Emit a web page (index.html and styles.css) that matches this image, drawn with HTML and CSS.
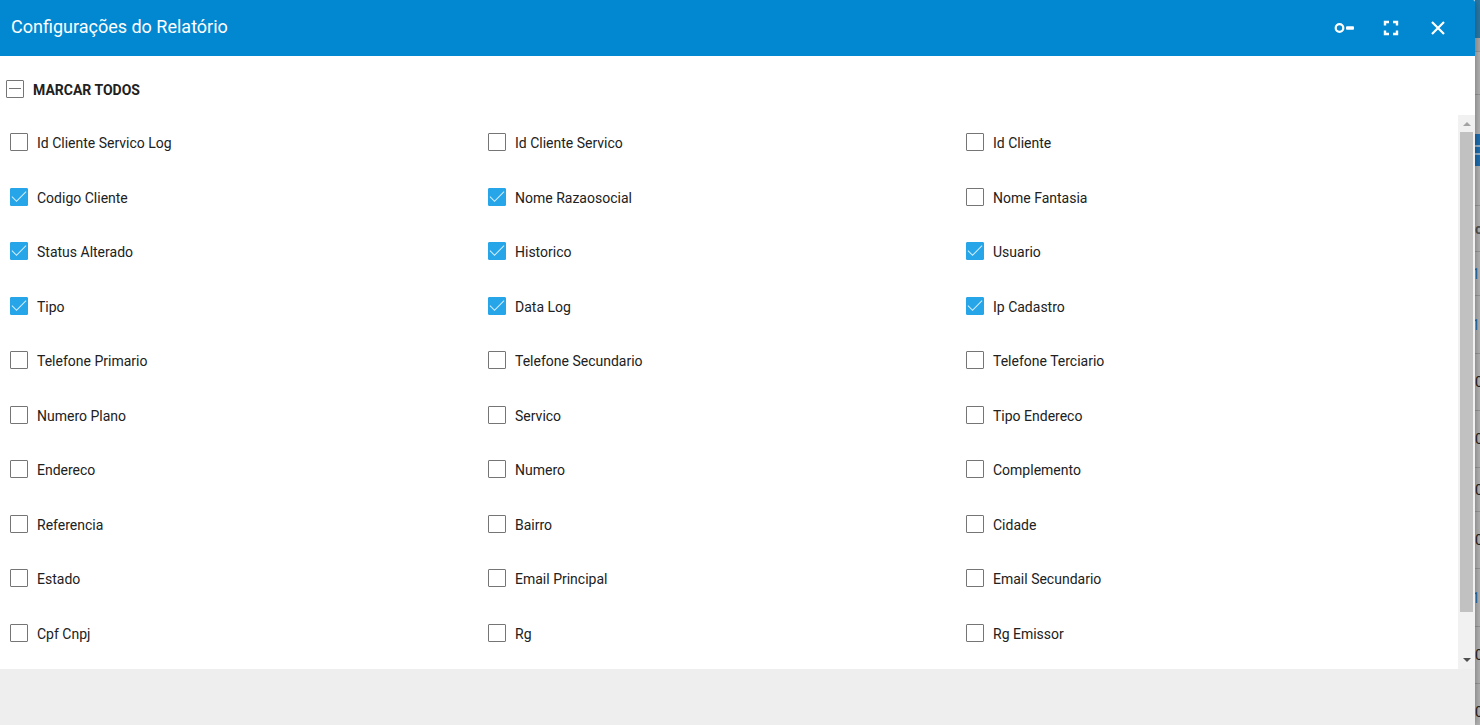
FILE: index.html
```
<!doctype html>
<html lang="pt-BR">
<head>
  <meta charset="UTF-8" />
  <title>Configurações do Relatório</title>
  <meta name="viewport" content="width=device-width, initial-scale=1.0" />
  <link rel="stylesheet" href="styles.css">
</head>
<body>
  <div class="page">
    <!-- Report settings dialog -->
    <main class="dialog">
      <header class="dialog-header">
        <h1>Configurações do Relatório</h1>
        <div class="actions">
          <button type="button" aria-label="Atalhos">
            <svg width="20" height="20" viewBox="0 0 20 20"><circle cx="5.5" cy="10" r="3.8" fill="none" stroke="#fff" stroke-width="2.2"/><rect x="12" y="8.2" width="8" height="3.6" rx="1" fill="#fff"/></svg>
          </button>
          <button type="button" aria-label="Tela cheia">
            <svg width="20" height="20" viewBox="0 0 20 20"><path d="M4 7.5V4h4M12 4h4v3.500M16 12.500V16h-4M8 16H4v-3.500" fill="none" stroke="#fff" stroke-width="2.400"/></svg>
          </button>
          <button type="button" aria-label="Fechar">
            <svg width="20" height="20" viewBox="0 0 20 20"><path d="M4 4l12 12M16 4L4 16" fill="none" stroke="#fff" stroke-width="2.200"/></svg>
          </button>
        </div>
      </header>

      <div class="select-all">
        <label><input type="checkbox" id="check-all"> Marcar Todos</label>
      </div>

      <div class="content">
        <div class="fields" id="fields">
          <label><input type="checkbox"> Id Cliente Servico Log</label>
          <label><input type="checkbox"> Id Cliente Servico</label>
          <label><input type="checkbox"> Id Cliente</label>
          <label><input type="checkbox" checked> Codigo Cliente</label>
          <label><input type="checkbox" checked> Nome Razaosocial</label>
          <label><input type="checkbox"> Nome Fantasia</label>
          <label><input type="checkbox" checked> Status Alterado</label>
          <label><input type="checkbox" checked> Historico</label>
          <label><input type="checkbox" checked> Usuario</label>
          <label><input type="checkbox" checked> Tipo</label>
          <label><input type="checkbox" checked> Data Log</label>
          <label><input type="checkbox" checked> Ip Cadastro</label>
          <label><input type="checkbox"> Telefone Primario</label>
          <label><input type="checkbox"> Telefone Secundario</label>
          <label><input type="checkbox"> Telefone Terciario</label>
          <label><input type="checkbox"> Numero Plano</label>
          <label><input type="checkbox"> Servico</label>
          <label><input type="checkbox"> Tipo Endereco</label>
          <label><input type="checkbox"> Endereco</label>
          <label><input type="checkbox"> Numero</label>
          <label><input type="checkbox"> Complemento</label>
          <label><input type="checkbox"> Referencia</label>
          <label><input type="checkbox"> Bairro</label>
          <label><input type="checkbox"> Cidade</label>
          <label><input type="checkbox"> Estado</label>
          <label><input type="checkbox"> Email Principal</label>
          <label><input type="checkbox"> Email Secundario</label>
          <label><input type="checkbox"> Cpf Cnpj</label>
          <label><input type="checkbox"> Rg</label>
          <label><input type="checkbox"> Rg Emissor</label>
        </div>
        <div class="scrollbar" aria-hidden="true">
          <svg class="arrow" width="17" height="17" viewBox="0 0 17 17"><path d="M5 11h8L9 7z" fill="#a3a3a3"/></svg>
          <div class="track"><div class="thumb"></div></div>
          <svg class="arrow" width="17" height="17" viewBox="0 0 17 17"><path d="M5 6h8l-4 4z" fill="#505050"/></svg>
        </div>
      </div>

      <footer class="dialog-footer"></footer>
    </main>

    <!-- Edge of the report behind the dialog -->
    <div class="behind" aria-hidden="true">
      <div class="topbar"></div>
      <div class="tabs"></div>
      <div class="filter"></div>
      <div class="toolbar"><div class="tool"></div></div>
      <div class="cell head">o</div>
      <div class="cell link">18</div>
      <div class="cell tall link">19</div>
      <div class="cell tall">0</div>
      <div class="cell tall">0</div>
      <div class="cell">0</div>
      <div class="cell tall">0</div>
      <div class="cell tall link">19</div>
      <div class="cell tall">0</div>
      <div class="cell tall">0</div>
    </div>
  </div>
  <script>
    const all = document.getElementById('check-all');
    const boxes = document.querySelectorAll('#fields input');

    function updateAll() {
      const marked = document.querySelectorAll('#fields input:checked').length;
      all.checked = marked === boxes.length;
      all.indeterminate = marked > 0 && marked < boxes.length;
    }

    all.addEventListener('change', () => {
      boxes.forEach(box => { box.checked = all.checked; });
    });
    boxes.forEach(box => box.addEventListener('change', updateAll));
    updateAll();
  </script>
</body>
</html>
```
FILE: styles.css
```
* {
  box-sizing: border-box;
}
body {
  margin: 0;
  font-family: Roboto, sans-serif;
  font-size: 14px;
  line-height: 20px;
  color: #212121;
}
.page {
  display: flex;
  height: 100vh;
  overflow: hidden;
}
/* Dialog */
.dialog {
  flex: 1;
  min-width: 0;
  display: flex;
  flex-direction: column;
  background: #fff;
  border-top-right-radius: 2px;
  box-shadow: 0 0 8px rgba(0, 0, 0, 0.4);
  position: relative;
  z-index: 1;
}
.dialog-header {
  display: flex;
  align-items: center;
  justify-content: space-between;
  height: 56px;
  padding: 0 23px 0 11px;
  background: #0288d1;
  border-top-right-radius: 2px;
  color: #fff;
}
.dialog-header h1 {
  margin: 0 0 2px;
  font-size: 18px;
  line-height: 24px;
  font-weight: 400;
}
.actions {
  display: flex;
  gap: 19px;
}
.actions button {
  display: flex;
  align-items: center;
  justify-content: center;
  width: 28px;
  height: 28px;
  padding: 0;
  border: none;
  background: none;
  cursor: pointer;
}
/* Checkboxes */
label {
  display: flex;
  align-items: center;
  gap: 9px;
  cursor: pointer;
}
input[type="checkbox"] {
  appearance: none;
  display: flex;
  align-items: center;
  justify-content: center;
  width: 18px;
  height: 18px;
  margin: 0 0 2px;
  border: 1px solid #757575;
  border-radius: 1px;
  background: #fff;
  cursor: pointer;
}
input[type="checkbox"]:checked {
  border-color: #26a6e8;
  background: #26a6e8;
}
input[type="checkbox"]:checked::before {
  content: "";
  width: 13px;
  height: 6px;
  margin-bottom: 5px;
  border: solid rgba(255, 255, 255, 0.8);
  border-width: 0 0 1px 1px;
  transform: rotate(-45deg);
}
input[type="checkbox"]:indeterminate::before {
  content: "";
  width: 12px;
  height: 1px;
  background: #757575;
}
.select-all {
  display: flex;
  align-items: center;
  height: 59px;
  padding: 8px 6px 0;
  font-weight: 700;
  text-transform: uppercase;
}
.content {
  flex: 1;
  min-height: 0;
  display: flex;
}
.fields {
  flex: 1;
  display: grid;
  grid-template-columns: repeat(3, 1fr);
  grid-auto-rows: 1fr;
  padding: 1px 14px 8px 10px;
}
/* Scrollbar */
.scrollbar {
  display: flex;
  flex-direction: column;
  width: 17px;
  background: #f1f1f1;
}
.arrow {
  display: block;
}
.track {
  flex: 1;
  display: flex;
  padding: 0 2px 40px;
}
.thumb {
  flex: 1;
  background: #c1c1c1;
}
.dialog-footer {
  height: 56px;
  background: #eee;
}
/* Page behind the dialog */
.behind {
  width: 5px;
  overflow: hidden;
  background: #b5b5b5;
}
.topbar {
  height: 38px;
  background: #2b7ba8;
}
.tabs {
  height: 14px;
  background: #aaa;
  border-bottom: 1px solid #999;
}
.filter {
  height: 43px;
  border-bottom: 1px solid #999;
}
.toolbar {
  height: 111px;
  padding-top: 39px;
  border-bottom: 1px solid #999;
}
.tool {
  height: 32px;
  padding-top: 11px;
  background: #1f6fb2;
}
.tool::before {
  content: "";
  display: block;
  height: 6px;
  border: solid #9bb4ca;
  border-width: 2px 0;
}
.cell {
  display: flex;
  align-items: center;
  height: 44px;
  border-bottom: 1px solid #999;
}
.cell.tall {
  height: 57px;
}
.cell.head {
  height: 46px;
  font-weight: 700;
  color: #555;
}
.cell.link {
  text-indent: -3px;
  color: #1f6fb2;
}
.cell.tall.link {
  height: 58px;
}
```
